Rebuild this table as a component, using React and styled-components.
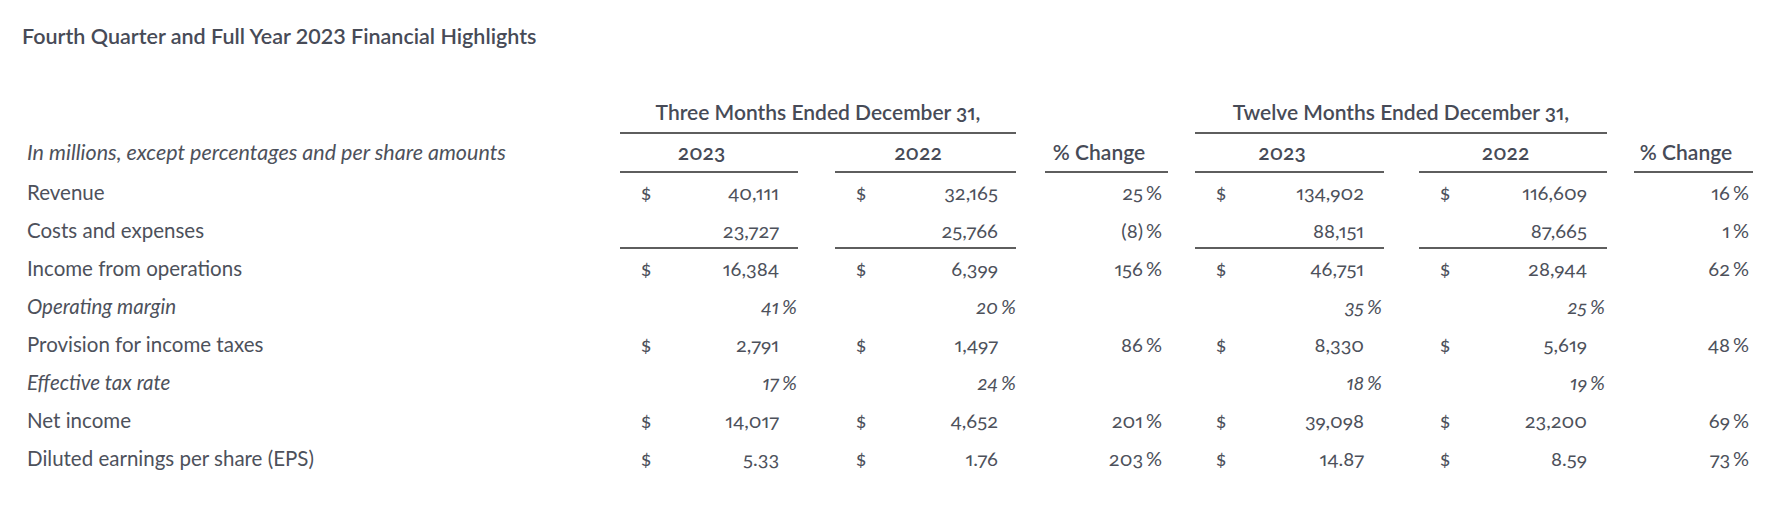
import React from 'react';
import styled, { createGlobalStyle } from 'styled-components';

const GlobalStyle = createGlobalStyle`
  html, body { margin: 0; padding: 0; background: #ffffff; }
  body { font-family: Lato, "Open Sans", sans-serif; color: #4d515b; }
`;

const Page = styled.div`
  padding: 24px 0 0 22px;
`;

const Title = styled.h2`
  margin: 0 0 46px;
  font-family: Lato, "Open Sans", sans-serif;
  font-weight: 600;
  font-size: 21.5px;
  line-height: 24px;
  color: #474b57;
`;

const Table = styled.table`
  width: 1731px;
  table-layout: fixed;
  border-collapse: separate;
  border-spacing: 0;
  font-family: Lato, "Open Sans", sans-serif;
  font-size: 20px;
  line-height: 24px;
  font-variant-numeric: oldstyle-nums proportional-nums;
  color: #4d515b;
`;

const RULE = '2px solid #5e5e5e';

const HeadRow = styled.tr``;

const GroupHead = styled.th`
  vertical-align: top;
  padding: 6px 0 8px;
  border-bottom: ${RULE};
  font-size: 21px;
  font-weight: 600;
  color: #474b57;
  text-align: center;
  white-space: nowrap;
`;

const SubHead = styled.th`
  vertical-align: top;
  padding: 6px 15px 7px 0;
  border-bottom: ${RULE};
  font-size: 21px;
  font-weight: 600;
  color: #474b57;
  text-align: center;
  white-space: nowrap;
`;

const Caption = styled.th`
  vertical-align: top;
  padding: 6px 0 7px 5px;
  font-size: 21.5px;
  font-weight: 400;
  font-style: italic;
  text-align: left;
  white-space: nowrap;
`;

const Blank = styled.th`
  padding: 0;
`;

const Row = styled.tr`
  font-style: ${p => (p.$italic ? 'italic' : 'normal')};
`;

const Cell = styled.td`
  vertical-align: top;
  padding: 7px 0 ${p => (p.$rule ? 5 : 7)}px;
  border-bottom: ${p => (p.$rule ? RULE : 'none')};
  white-space: nowrap;
`;

const Label = styled(Cell)`
  padding-left: 5px;
  font-size: 20.5px;
  text-align: left;
`;

const Dollar = styled(Cell)`
  padding-left: 21px;
  text-align: left;
`;

const Num = styled(Cell)`
  text-align: right;
`;

const Pct = styled(Cell)`
  padding-left: 3px;
  text-align: left;
`;

const Gap = styled(Cell)``;

const cols = [598, 55, 104, 19, 37, 55, 108, 18, 29, 98, 25, 27, 52, 117, 20, 35, 53, 115, 20, 27, 96, 23];

const rows = [
  { label: 'Revenue', dollar: true, v: ['40,111', '32,165', '134,902', '116,609'], c: ['25', '16'] },
  { label: 'Costs and expenses', rule: true, v: ['23,727', '25,766', '88,151', '87,665'], c: ['(8)', '1'] },
  { label: 'Income from operations', dollar: true, v: ['16,384', '6,399', '46,751', '28,944'], c: ['156', '62'] },
  { label: 'Operating margin', italic: true, v: ['41', '20', '35', '25'] },
  { label: 'Provision for income taxes', dollar: true, v: ['2,791', '1,497', '8,330', '5,619'], c: ['86', '48'] },
  { label: 'Effective tax rate', italic: true, v: ['17', '24', '18', '19'] },
  { label: 'Net income', dollar: true, v: ['14,017', '4,652', '39,098', '23,200'], c: ['201', '69'] },
  { label: 'Diluted earnings per share (EPS)', dollar: true, v: ['5.33', '1.76', '14.87', '8.59'], c: ['203', '73'] },
];

function Money({ row, value }) {
  return (
    <>
      <Dollar $rule={row.rule}>{row.dollar ? '$' : ''}</Dollar>
      <Num $rule={row.rule}>{value}</Num>
      <Pct $rule={row.rule}>{row.italic ? '%' : ''}</Pct>
    </>
  );
}

function Change({ value }) {
  return (
    <>
      <Num>{value}</Num>
      <Pct>{value ? '%' : ''}</Pct>
    </>
  );
}

export default function App() {
  return (
    <Page>
      <GlobalStyle />
      <Title>Fourth Quarter and Full Year 2023 Financial Highlights</Title>
      <Table>
        <colgroup>
          {cols.map((w, i) => (
            <col key={i} style={{ width: w }} />
          ))}
        </colgroup>
        <thead>
          <HeadRow>
            <Blank />
            <GroupHead colSpan={7}>Three Months Ended December 31,</GroupHead>
            <Blank />
            <Blank colSpan={2} />
            <Blank />
            <GroupHead colSpan={7}>Twelve Months Ended December 31,</GroupHead>
            <Blank />
            <Blank colSpan={2} />
          </HeadRow>
          <HeadRow>
            <Caption>In millions, except percentages and per share amounts</Caption>
            <SubHead colSpan={3}>2023</SubHead>
            <Blank />
            <SubHead colSpan={3}>2022</SubHead>
            <Blank />
            <SubHead colSpan={2}>% Change</SubHead>
            <Blank />
            <SubHead colSpan={3}>2023</SubHead>
            <Blank />
            <SubHead colSpan={3}>2022</SubHead>
            <Blank />
            <SubHead colSpan={2}>% Change</SubHead>
          </HeadRow>
        </thead>
        <tbody>
          {rows.map(row => (
            <Row key={row.label} $italic={row.italic}>
              <Label>{row.label}</Label>
              <Money row={row} value={row.v[0]} />
              <Gap />
              <Money row={row} value={row.v[1]} />
              <Gap />
              <Change value={row.c ? row.c[0] : ''} />
              <Gap />
              <Money row={row} value={row.v[2]} />
              <Gap />
              <Money row={row} value={row.v[3]} />
              <Gap />
              <Change value={row.c ? row.c[1] : ''} />
            </Row>
          ))}
        </tbody>
      </Table>
    </Page>
  );
}
